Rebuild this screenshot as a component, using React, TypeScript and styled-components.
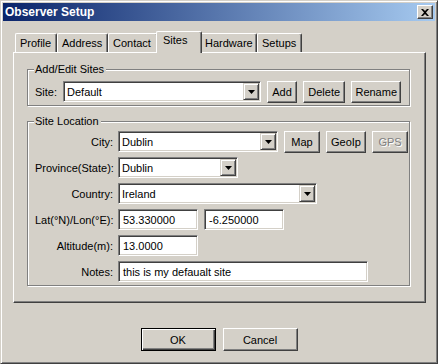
import React from 'react'
import styled, { createGlobalStyle, css } from 'styled-components'

const face = '#D4D0C8'
const light = '#FFFFFF'
const shadow = '#808080'
const dark = '#404040'

const GlobalStyle = createGlobalStyle`
  html, body {
    margin: 0;
    padding: 0;
    background: ${face};
  }
  body {
    font-family: "Liberation Sans", Arial, sans-serif;
    font-size: 11px;
    color: #000;
  }
  * {
    box-sizing: border-box;
  }
`

const raised = css`
  border: 1px solid;
  border-color: ${light} ${dark} ${dark} ${light};
  box-shadow: inset -1px -1px 0 ${shadow};
  background: ${face};
`

const sunken = css`
  border: 1px solid;
  border-color: ${shadow} ${light} ${light} ${shadow};
  box-shadow: inset 1px 1px 0 ${dark}, inset -1px -1px 0 ${face};
  background: #fff;
`

const Window = styled.div`
  width: 438px;
  height: 364px;
  background: ${face};
  border: 1px solid;
  border-color: ${face} ${dark} ${dark} ${face};
  box-shadow: inset 1px 1px 0 ${light}, inset -1px -1px 0 ${shadow};
  padding: 2px;
  display: flex;
  flex-direction: column;
`

const TitleBar = styled.div`
  height: 18px;
  background: linear-gradient(to right, #0a246a, #a6caf0);
  display: flex;
  align-items: center;
  justify-content: space-between;
  padding: 0 2px 0 2px;
`

const Title = styled.span`
  color: #fff;
  font-weight: bold;
  font-size: 12px;
`

const CloseButton = styled.div`
  ${raised}
  width: 16px;
  height: 14px;
  display: flex;
  align-items: center;
  justify-content: center;
`

const Body = styled.div`
  flex: 1;
  display: flex;
  flex-direction: column;
  padding: 10px 9px 0 10px;
`

const TabStrip = styled.div`
  height: 21px;
  display: flex;
  align-items: flex-end;
  padding-left: 2px;
`

const Tab = styled.div<{ $w: number; $active?: boolean }>`
  width: ${p => p.$w + (p.$active ? 4 : 0)}px;
  height: ${p => (p.$active ? 22 : 19)}px;
  margin: 0 ${p => (p.$active ? -2 : 0)}px ${p => (p.$active ? -1 : 0)}px;
  position: relative;
  z-index: ${p => (p.$active ? 2 : 1)};
  background: ${face};
  border-top: 1px solid ${light};
  border-left: 1px solid ${light};
  border-right: 1px solid ${dark};
  border-radius: 2px 2px 0 0;
  box-shadow: inset -1px 0 0 ${shadow};
  padding: ${p => (p.$active ? '2px 0 0 6px' : '3px 0 0 4px')};
  white-space: nowrap;
`

const Panel = styled.div`
  height: 251px;
  border: 1px solid;
  border-color: ${light} ${dark} ${dark} ${light};
  box-shadow: inset -1px -1px 0 ${shadow};
  padding: 10px 15px 0 13px;
  display: flex;
  flex-direction: column;
  gap: 9px;
`

const Group = styled.fieldset<{ $pt: number }>`
  margin: 0;
  min-width: 0;
  border: 1px solid ${shadow};
  box-shadow: 1px 1px 0 ${light}, inset 1px 1px 0 ${light};
  padding: ${p => p.$pt}px 8px 3px 5px;
`

const Legend = styled.legend`
  padding: 0 2px 0 1px;
  margin-left: 1px;
  line-height: 13px;
  background: ${face};
`

const Row = styled.div`
  display: flex;
  align-items: center;
  gap: 6px;
  height: 21px;
`

const Grid = styled.div`
  display: grid;
  grid-template-columns: 80px 1fr;
  column-gap: 5px;
  row-gap: 5px;
  grid-auto-rows: 21px;
  align-items: center;
`

const Label = styled.span<{ $right?: boolean }>`
  white-space: nowrap;
  text-align: ${p => (p.$right ? 'right' : 'left')};
  padding-left: 2px;
`

const Combo = styled.div<{ $w: number }>`
  ${sunken}
  width: ${p => p.$w}px;
  height: 21px;
  display: flex;
  padding: 1px;
`

const ComboText = styled.span`
  flex: 1;
  display: flex;
  align-items: center;
  padding-left: 2px;
`

const DropButton = styled.span`
  width: 16px;
  border: 1px solid;
  border-color: ${face} ${dark} ${dark} ${face};
  box-shadow: inset 1px 1px 0 ${light}, inset -1px -1px 0 ${shadow};
  background: ${face};
  display: flex;
  align-items: center;
  justify-content: center;
`

const Field = styled.div<{ $w: number }>`
  ${sunken}
  width: ${p => p.$w}px;
  height: 21px;
  display: flex;
  align-items: center;
  padding-left: 4px;
  white-space: nowrap;
`

const Button = styled.div<{ $w: number; $disabled?: boolean }>`
  ${raised}
  width: ${p => p.$w}px;
  height: 22px;
  display: flex;
  align-items: center;
  justify-content: center;
  color: ${p => (p.$disabled ? shadow : '#000')};
  text-shadow: ${p => (p.$disabled ? `1px 1px 0 ${light}` : 'none')};
`

const Footer = styled.div`
  display: flex;
  justify-content: center;
  gap: 7px;
  margin-top: 25px;
  padding-right: 1px;
`

const DialogButton = styled.div<{ $default?: boolean }>`
  width: 75px;
  height: 23px;
  display: flex;
  align-items: center;
  justify-content: center;
  background: ${face};
  border: 1px solid;
  border-color: ${p => (p.$default ? '#000' : `${light} ${dark} ${dark} ${light}`)};
  box-shadow: ${p =>
    p.$default
      ? `inset 1px 1px 0 ${light}, inset -1px -1px 0 ${dark}, inset -2px -2px 0 ${shadow}`
      : `inset -1px -1px 0 ${shadow}`};
`

const Arrow = () => (
  <svg width="7" height="4" viewBox="0 0 7 4">
    <path d="M0 0h7L3.5 4z" fill="#000" />
  </svg>
)

const ComboBox = ({ w, value }: { w: number; value: string }) => (
  <Combo $w={w}>
    <ComboText>{value}</ComboText>
    <DropButton>
      <Arrow />
    </DropButton>
  </Combo>
)

const tabs = [
  { label: 'Profile', w: 42 },
  { label: 'Address', w: 51 },
  { label: 'Contact', w: 50 },
  { label: 'Sites', w: 42, active: true },
  { label: 'Hardware', w: 57 },
  { label: 'Setups', w: 45 },
]

export default function App() {
  return (
    <>
      <GlobalStyle />
      <Window>
        <TitleBar>
          <Title>Observer Setup</Title>
          <CloseButton>
            <svg width="8" height="7" viewBox="0 0 8 7">
              <path
                d="M0 0h2l2 2 2-2h2L5 3.5 8 7H6L4 5 2 7H0l3-3.5z"
                fill="#000"
              />
            </svg>
          </CloseButton>
        </TitleBar>
        <Body>
          <TabStrip>
            {tabs.map(t => (
              <Tab key={t.label} $w={t.w} $active={t.active}>
                {t.label}
              </Tab>
            ))}
          </TabStrip>
          <Panel>
            <Group $pt={5}>
              <Legend>Add/Edit Sites</Legend>
              <Row>
                <Label>Site:</Label>
                <ComboBox w={200} value="Default" />
                <Button $w={30}>Add</Button>
                <Button $w={43}>Delete</Button>
                <Button $w={50}>Rename</Button>
              </Row>
            </Group>
            <Group $pt={3}>
              <Legend>Site Location</Legend>
              <Grid>
                <Label $right>City:</Label>
                <Row>
                  <ComboBox w={160} value="Dublin" />
                  <Button $w={36}>Map</Button>
                  <Button $w={40}>GeoIp</Button>
                  <Button $w={36} $disabled>
                    GPS
                  </Button>
                </Row>
                <Label $right>Province(State):</Label>
                <ComboBox w={120} value="Dublin" />
                <Label $right>Country:</Label>
                <ComboBox w={199} value="Ireland" />
                <Label $right>Lat(°N)/Lon(°E):</Label>
                <Row>
                  <Field $w={80}>53.330000</Field>
                  <Field $w={80}>-6.250000</Field>
                </Row>
                <Label $right>Altitude(m):</Label>
                <Field $w={80}>13.0000</Field>
                <Label $right>Notes:</Label>
                <Field $w={250}>this is my defaualt site</Field>
              </Grid>
            </Group>
          </Panel>
          <Footer>
            <DialogButton $default>OK</DialogButton>
            <DialogButton>Cancel</DialogButton>
          </Footer>
        </Body>
      </Window>
    </>
  )
}
